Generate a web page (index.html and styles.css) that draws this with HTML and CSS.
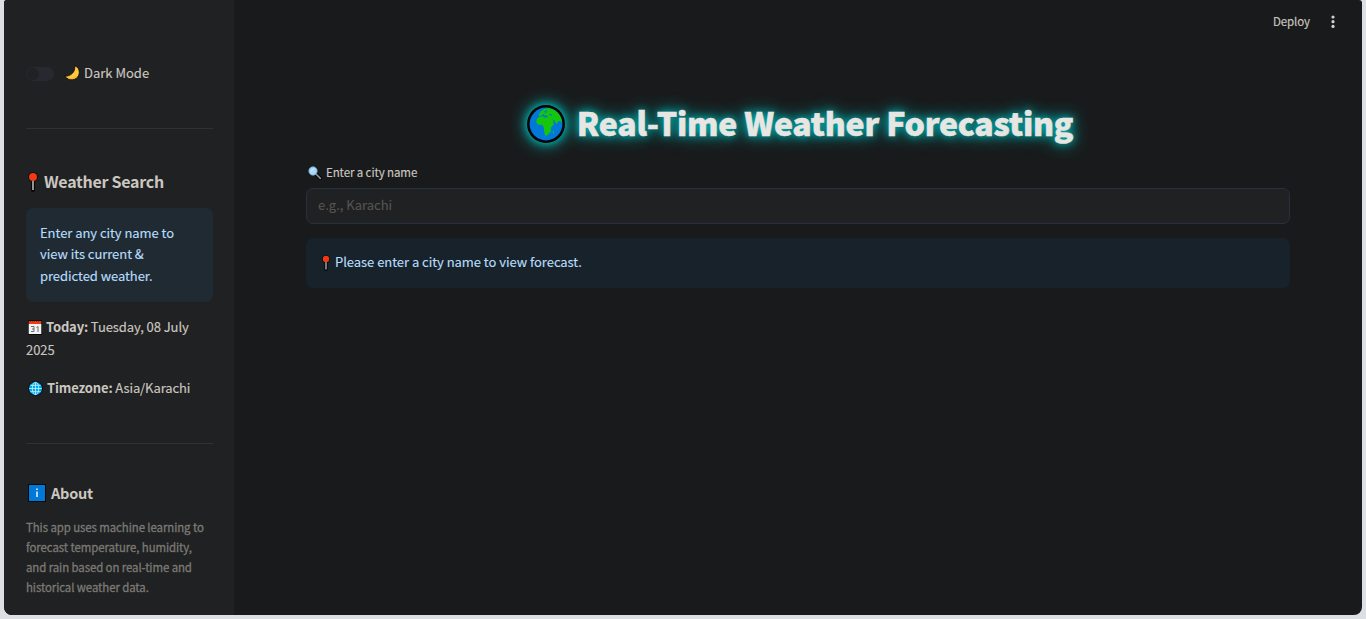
FILE: index.html
```html
<!DOCTYPE html>
<html lang="en">
<head>
<meta charset="utf-8">
<title>Real-Time Weather Forecasting</title>
<link rel="stylesheet" href="styles.css">
</head>
<body>
<svg class="defs" width="0" height="0">
  <symbol id="pin" viewBox="0 0 10 20">
    <path d="M5 8v10" stroke="#050505" stroke-width="4" stroke-linecap="round"/>
    <circle cx="5" cy="5" r="4.8" fill="#050505"/>
    <path d="M5 8v10" stroke="#b0b0ae" stroke-width="1.7"/>
    <circle cx="5" cy="5" r="4" fill="#f03a17"/>
  </symbol>
</svg>
<div class="app">
  <aside class="sidebar">
    <label class="toggle-row">
      <span class="toggle"><span class="knob"></span></span>
      <svg class="moon" viewBox="0 0 16 16"><path d="M10.600.8C14.800 2 16.200 6.800 14.700 10.200 12.500 15.400 5.300 16.800.8 11.200 6 11.500 11.800 7.500 10.600.8Z" fill="#ffc83d" stroke="#080808" stroke-width=".8" stroke-linejoin="round"/><path d="M4 13c3 1 6 .3 8-1.700" fill="none" stroke="#f5a72a" stroke-width=".8"/></svg>
      <span class="toggle-text">Dark Mode</span>
    </label>
    <hr>
    <h2 class="search-title"><svg class="pin-lg"><use href="#pin"/></svg><span>Weather Search</span></h2>
    <div class="info">Enter any city name to<br>view its current &amp;<br>predicted weather.</div>
    <p class="today"><svg class="calendar" viewBox="0 0 14 15"><path d="M0 0h14v15H0z" fill="#090909"/><path d="M.7 1h12.600v3H.7z" fill="#f03a17"/><path d="M.7 4h12.600v10H.7z" fill="#f3f3f3"/><path d="M2 1.500h1m1 0h1m1 0h1m1 0h1m1 0h1" stroke="#a62b18"/><path d="M3 6.500h3v5H3m1-2.500h2M8.500 7.500l1.500-1v5.500" fill="none" stroke="#6c6c6c"/></svg><b>Today:</b> Tuesday, 08 July<br>2025</p>
    <p class="timezone"><svg class="globe" viewBox="0 0 15 15"><circle cx="7.500" cy="7.500" r="7.400" fill="#071014"/><circle cx="7.500" cy="7.500" r="6.500" fill="#00a9ec"/><g fill="none" stroke="#c9f3ff" stroke-width=".8"><ellipse cx="7.500" cy="7.500" rx="3.200" ry="6.200"/><path d="M7.500 1.300v12.400M1.200 7.500h12.600M2.300 4.300h10.400M2.300 10.700h10.400"/></g></svg><b>Timezone:</b> Asia/Karachi</p>
    <hr>
    <h3 class="about-title"><svg class="info-icon" viewBox="0 0 18 18"><path d="M0 0h18v18H0z" fill="#080808"/><path d="M1 1h16v16H1z" fill="#0078d7"/><path d="M9 7.500v5.500M9 4.500v1.500" stroke="#fff" stroke-width="1.400"/></svg><span>About</span></h3>
    <p class="caption">This app uses machine learning to<br>forecast temperature, humidity,<br>and rain based on real-time and<br>historical weather data.</p>
  </aside>
  <main class="main">
    <header class="toolbar">
      <span class="deploy">Deploy</span>
      <svg class="menu" viewBox="0 0 4 14"><g fill="#d5d1ca"><circle cx="2" cy="2" r="1.600"/><circle cx="2" cy="6.700" r="1.600"/><circle cx="2" cy="11.400" r="1.600"/></g></svg>
    </header>
    <section class="content">
      <h1 class="title">
        <svg class="earth" viewBox="0 0 38 38"><circle cx="19" cy="19" r="19" fill="#030303"/><circle cx="19" cy="19" r="16.400" fill="#0078d7"/><path d="M12.500 9.500l1-3 3.500-2.500 4-.7c6 .5 11 4 13 9.700.8 2 1 3.500.9 5l-1.500-2-2 .2-1.900 3-2-3.500-2.500-2 2 3.200-2 .8 2 .2c-.3 2.600-3 3.500-3.300 5.900l.3 2.400-2.400 2.500-1.500 1.700-1.900.2-1-3.500-.5-5-1.600-2.300-3.800-.1-2-2.200.4-3.300 2.300-2.400 4.200-.6 1 1.400 3-.2.800-1.600-3.300-.4-1.400-1.500-1.700 1.700-2.600.3.100-2.300 2-.3z" fill="#16c60c"/><path d="M17 7l2-1.500 1 .5-2 2.500M22 9.500l3 .5-1 .7" stroke="#0078d7" stroke-width=".9" fill="none"/><path d="M26 26.500l1.300-1-.5 3-1 .3z" fill="#16c60c"/></svg>
        <span>Real-Time Weather Forecasting</span>
      </h1>
      <label class="field-label" for="city"><svg class="magnifier" viewBox="0 0 14 14"><path d="M7.500 7.500l5 5" stroke="#050505" stroke-width="3.400" stroke-linecap="round"/><path d="M8 8l4.300 4.300" stroke="#8b9197" stroke-width="1.700" stroke-linecap="round"/><circle cx="5" cy="5" r="4.200" fill="#a9d9fa" stroke="#6a9ac0" stroke-width=".8"/><path d="M3 5.500L6 2.500" stroke="#d8f0ff"/></svg><span>Enter a city name</span></label>
      <input class="city" id="city" type="text" placeholder="e.g., Karachi">
      <div class="notice"><svg class="pin-sm"><use href="#pin"/></svg><span>Please enter a city name to view forecast.</span></div>
    </section>
  </main>
</div>
</body>
</html>
```
FILE: styles.css
```css
* { box-sizing: border-box; }
body { margin: 0; height: 619px; padding: 0 4px 4px; overflow: hidden; background: #dcdfe3; color: #cbc7c0; font-family: "Noto Sans CJK SC", "Noto Sans", sans-serif; font-size: 13px; -webkit-text-stroke: .15px; }
svg { display: block; flex: none; }
.defs { position: absolute; }
h1, h2, h3, p { margin: 0; }
.app { display: flex; height: 615px; border-radius: 3px 3px 8px 8px; overflow: hidden; background: #191a1b; }
.sidebar { width: 230px; flex: none; padding: 62px 21px 0 22px; background: #202122; white-space: nowrap; }
.toggle-row { display: flex; align-items: center; height: 23px; }
.toggle { width: 28px; height: 14px; padding: 1px; border-radius: 7px; background: #272830; }
.knob { display: block; width: 12px; height: 12px; border-radius: 50%; background: #202122; }
.moon { width: 16px; height: 16px; margin: 0 4px 2px 10px; }
.toggle-text { padding-bottom: 2px; }
hr { height: 1px; margin: 43px 0 0; border: 0; background: #303130; }
.search-title { display: flex; align-items: center; height: 28px; margin-top: 39px; padding-left: 2px; font-size: 16px; letter-spacing: -.27px; -webkit-text-stroke: 0; }
.search-title span { padding-bottom: 2px; }
.pin-lg { width: 10px; height: 20px; margin-right: 6px; }
.info { height: 94px; margin-top: 12px; padding: 13.6px 14px; border-radius: 7px; background: #1f2a33; color: #b6dcfa; line-height: 21.6px; letter-spacing: -.05px; }
.today { margin-top: 13px; line-height: 23px; letter-spacing: -.08px; }
.today svg, .timezone svg { display: inline-block; vertical-align: -3px; }
.today b, .timezone b { letter-spacing: -.15px; -webkit-text-stroke: 0; }
.calendar { width: 14px; height: 15px; margin: 0 4px 0 2px; }
.timezone { margin-top: 15px; line-height: 23px; letter-spacing: -.1px; }
.timezone + hr { margin-top: 44px; }
.globe { width: 15px; height: 15px; margin: 0 4px 0 2px; }
.about-title { display: flex; align-items: center; height: 24px; margin-top: 38px; padding-left: 2px; font-size: 14.500px; letter-spacing: -.25px; -webkit-text-stroke: 0; }
.about-title svg { margin-bottom: 2px; }
.about-title span { padding-bottom: 3px; }
.info-icon { width: 18px; height: 18px; margin-right: 5px; }
.caption { margin-top: 11px; color: #7b7975; font-size: 11.400px; line-height: 20px; letter-spacing: -.07px; -webkit-text-stroke: .3px; }
.main { flex: 1; min-width: 0; }
.toolbar { display: flex; justify-content: flex-end; align-items: center; height: 44px; padding-right: 27px; font-size: 11.500px; }
.deploy { padding-bottom: 2px; letter-spacing: -.1px; }
.menu { width: 4px; height: 14px; margin-left: 21px; }
.content { padding: 53px 72px 0; }
.title { display: flex; justify-content: center; align-items: center; gap: 12px; height: 54px; padding-left: 4px; color: #e8e6e3; font-size: 32px; font-weight: 900; line-height: 50px; white-space: nowrap; letter-spacing: -.23px; -webkit-text-stroke: .5px; text-shadow: 0 0 9px #00c0c0, 0 0 18px #00b5b5; }
.title span { padding-bottom: 4px; }
.earth { width: 38px; height: 38px; margin-bottom: 1px; border-radius: 50%; box-shadow: 0 0 9px #00c0c0, 0 0 18px #00b5b5; }
.field-label { display: flex; align-items: center; height: 20px; margin-top: 12px; padding-left: 2px; font-size: 11.500px; letter-spacing: -.1px; }
.field-label span { padding-bottom: 2px; }
.magnifier { width: 14px; height: 14px; margin-right: 4px; }
.city { display: block; width: 100%; height: 36px; margin-top: 5px; padding: 0 11px 4px; border: 1px solid #28303e; border-radius: 7px; background: #202122; color: #cbc7c0; font: inherit; }
.city::placeholder { color: #555451; opacity: 1; }
.notice { display: flex; align-items: center; height: 50px; margin-top: 14px; padding-left: 16px; border-radius: 7px; background: #18222a; color: #b6dcfa; }
.notice svg { margin-bottom: 1px; }
.notice span { padding-bottom: 3px; letter-spacing: -.04px; }
.pin-sm { width: 8px; height: 16px; margin-right: 5px; }
```
